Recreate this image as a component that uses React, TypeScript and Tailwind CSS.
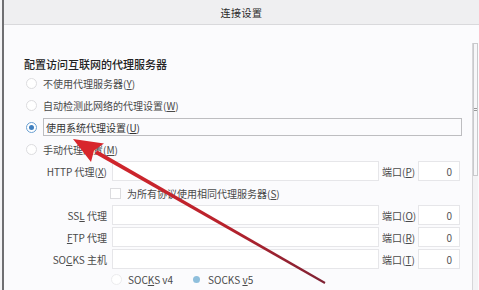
import React from "react";

function Radio({ checked = false, faint = false }: { checked?: boolean; faint?: boolean }) {
  if (checked) {
    return (
      <span className="w-[11px] h-[11px] rounded-full border border-[#6aa0d2] bg-white flex items-center justify-center shrink-0">
        <span className="w-[5px] h-[5px] rounded-full bg-[#3f7fbf]" />
      </span>
    );
  }
  return (
    <span
      className={`w-[11px] h-[11px] rounded-full border bg-white shrink-0 ${faint ? "border-[#ececee]" : "border-[#dcdcdf]"}`}
    />
  );
}

function ProxyRow({ label, port, portKey }: { label: React.ReactNode; port: string; portKey: string }) {
  return (
    <div className="h-[22px] flex items-center">
      <div className="w-[84px] text-right text-[10px] text-[#4a4a4a] pr-[1px] whitespace-nowrap">{label}</div>
      <div className="ml-[4px] w-[267px] h-[20px] bg-white border border-[#e6e6e9] shrink-0" />
      <div className="ml-[3px] w-[36px] text-[10px] text-[#4a4a4a] whitespace-nowrap shrink-0">
        端口(<span className="underline">{portKey}</span>)
      </div>
      <div className="w-[42px] h-[20px] bg-white border border-[#e6e6e9] flex items-center justify-end pr-[7px] text-[10px] text-[#555] shrink-0">
        {port}
      </div>
    </div>
  );
}

export default function App() {
  return (
    <div className="relative w-[479px] h-[290px] overflow-hidden bg-[#fbfbfd] flex font-['Noto_Sans_CJK_SC','Noto_Sans',sans-serif]">
      <div className="w-[2px] bg-[#f4f4f6]" />
      <div className="w-[2px] bg-[#6f6f72]" />
      <div className="flex-1 flex flex-col">
        {/* header */}
        <div className="h-[25px] bg-[#efeff1] border-b border-[#d9d9dc] flex items-center justify-center text-[10px] text-[#2a2a2a] tracking-[0.5px]">
          连接设置
        </div>

        <div className="flex-1 flex">
          {/* content */}
          <div className="flex-1 pl-[20px] pt-[31px]">
            <div className="h-[16px] flex items-center text-[11px] font-medium text-[#222]">
              配置访问互联网的代理服务器
            </div>

            <div className="h-[22px] flex items-center gap-[6px] pl-[2px] text-[10px] text-[#4a4a4a]">
              <Radio />
              <span>
                不使用代理服务器(<span className="underline">Y</span>)
              </span>
            </div>
            <div className="h-[22px] flex items-center gap-[6px] pl-[2px] text-[10px] text-[#4a4a4a]">
              <Radio />
              <span>
                自动检测此网络的代理设置(<span className="underline">W</span>)
              </span>
            </div>
            <div className="h-[22px] flex items-center gap-[6px] pl-[2px] text-[10px] text-[#333]">
              <Radio checked />
              <div className="w-[419px] h-[18px] border border-[#bdbdc0] flex items-center pl-[2px]">
                使用系统代理设置(<span className="underline">U</span>)
              </div>
            </div>
            <div className="h-[22px] flex items-center gap-[6px] pl-[2px] text-[10px] text-[#4a4a4a]">
              <Radio />
              <span>
                手动代理配置(<span className="underline">M</span>)
              </span>
            </div>

            <ProxyRow label={<>HTTP 代理(<span className="underline">X</span>)</>} port="0" portKey="P" />

            <div className="h-[22px] flex items-center pl-[86px] text-[10px] text-[#4a4a4a]">
              <span className="w-[11px] h-[11px] border border-[#dcdcdf] bg-white shrink-0" />
              <span className="ml-[6px]">
                为所有协议使用相同代理服务器(<span className="underline">S</span>)
              </span>
            </div>

            <ProxyRow label={<>SS<span className="underline">L</span> 代理</>} port="0" portKey="O" />
            <ProxyRow label={<><span className="underline">F</span>TP 代理</>} port="0" portKey="R" />
            <ProxyRow label={<>SO<span className="underline">C</span>KS 主机</>} port="0" portKey="T" />

            <div className="h-[18px] flex items-center pl-[87px] text-[10px] text-[#4a4a4a]">
              <Radio faint />
              <span className="ml-[6px]">
                SOC<span className="underline">K</span>S v4
              </span>
              <span className="ml-[20px] w-[7px] h-[7px] rounded-full bg-[#8fbfdc]" />
              <span className="ml-[8px]">
                SOCKS <span className="underline">v</span>5
              </span>
            </div>
          </div>

          {/* scrollbar */}
          <div className="w-[6px] mr-[1px] pt-[18px] flex flex-col">
            <div className="flex-1 border-l border-[#d6d6d9] bg-[#f3f3f5] flex flex-col">
              <div className="h-[133px] border border-[#c9c9cc] bg-[#f7f7f9] flex items-center justify-center">
                <span className="w-[3px] h-[3px] border-y border-[#999]" />
              </div>
            </div>
          </div>
        </div>
      </div>

      {/* red annotation arrow */}
      <svg className="absolute inset-0 pointer-events-none" width="479" height="290" viewBox="0 0 479 290">
        <defs>
          <linearGradient id="arrowGrad" x1="73" y1="139" x2="325" y2="283" gradientUnits="userSpaceOnUse">
            <stop offset="0" stopColor="#d8262c" />
            <stop offset="0.6" stopColor="#b8222c" />
            <stop offset="1" stopColor="#7e2234" />
          </linearGradient>
        </defs>
        <polygon points="97,150.3 325.5,282.1 324.5,283.9 95,153.7" fill="url(#arrowGrad)" />
        <polygon points="73,139 104,143.5 94,150.5 91,162" fill="#d8262c" />
      </svg>
    </div>
  );
}
